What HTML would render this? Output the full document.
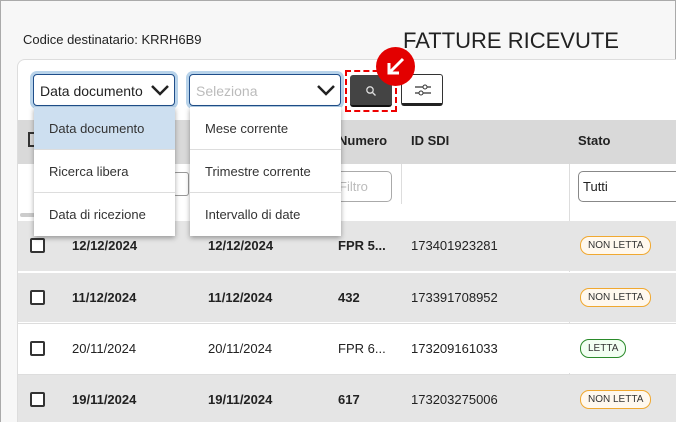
<!DOCTYPE html><html style="width:676px;height:422px;overflow:hidden"><head><style>
*{box-sizing:border-box;margin:0;padding:0}
body{width:676px;height:422px;overflow:hidden;background:#f7f7f7;font-family:"Liberation Sans",sans-serif;position:relative;color:#222;border:1px solid #aaa;border-bottom:none}
.a{position:absolute}
.card{left:16px;top:58px;width:659px;height:364px;background:#fff;border:1px solid #ddd;border-right:none;border-bottom:none;border-radius:8px 0 0 0;overflow:hidden}
.row{position:absolute;left:0;width:660px;height:50px;font-size:13px}
.row span{position:absolute;top:17px}
.cb{position:absolute;left:12px;top:17px;width:15px;height:15px;border:2px solid #333;border-radius:2px;background:#fff}
.b{font-weight:bold}
.pill{position:absolute;top:15px!important;left:562px;font-size:10px;border:1px solid #f0a830;background:#fff8ee;border-radius:9px;padding:3px 7px;color:#333}
.g{border-color:#2a8a2a;background:#f2fff2}
.sel{height:32px;border:1px solid #1f4e8a;border-radius:4px;box-shadow:0 0 0 3px #b8d3ea;background:#fff;font-size:14px;padding:8px 6px}
.dd{background:#fff;box-shadow:0 2px 5px rgba(0,0,0,.35);font-size:13px;color:#333}
.dd div{height:43px;padding:14px 0 0 15px;border-bottom:1px solid #ddd}
</style></head><body>
<div class="a" style="left:22px;top:31px;font-size:13px">Codice destinatario: KRRH6B9</div>
<div class="a" style="left:402px;top:27px;font-size:22px;color:#222">FATTURE RICEVUTE</div>
<div class="a card">
 <div class="a" style="left:0;top:60px;width:660px;height:44px;background:#d9d9d9"></div>
 <div class="a" style="left:320px;top:73px;font-size:13px;font-weight:bold">Numero</div>
 <div class="a" style="left:393px;top:73px;font-size:13px;font-weight:bold">ID SDI</div>
 <div class="a" style="left:560px;top:73px;font-size:13px;font-weight:bold">Stato</div>
 <div class="a" style="left:10px;top:72px;width:14px;height:15px;border:2px solid #333"></div>
 <div class="a" style="left:383px;top:104px;width:1px;height:40px;background:#ddd"></div>
 <div class="a" style="left:551px;top:104px;width:1px;height:260px;background:#ddd"></div>
 <div class="a" style="left:300px;top:111px;width:74px;height:31px;border:1px solid #aaa;border-radius:5px;color:#bbb;font-size:13px;padding:7px 0 0 20px">Filtro</div>
 <div class="a" style="left:560px;top:111px;width:130px;height:31px;border:1px solid #888;border-radius:5px;font-size:13px;padding:7px 0 0 4px">Tutti</div>
 <div class="a" style="left:155px;top:112px;width:16px;height:24px;border:1px solid #999;border-radius:3px"></div>
 <div class="a" style="left:2px;top:153px;width:60px;height:4px;background:#ccc;border-radius:2px"></div>
 <div class="row" style="top:161px;background:#e5e5e5"><i class="cb"></i><span class="b" style="left:54px">12/12/2024</span><span class="b" style="left:190px">12/12/2024</span><span class="b" style="left:320px">FPR 5...</span><span style="left:393px">173401923281</span><span class="pill">NON LETTA</span></div>
 <div class="row" style="top:212px;background:#e5e5e5;border-top:1px solid #fff"><i class="cb"></i><span class="b" style="left:54px">11/12/2024</span><span class="b" style="left:190px">11/12/2024</span><span class="b" style="left:320px">432</span><span style="left:393px">173391708952</span><span class="pill">NON LETTA</span></div>
 <div class="row" style="top:263px;background:#fff;border-top:1px solid #ddd"><i class="cb"></i><span style="left:54px">20/11/2024</span><span style="left:190px">20/11/2024</span><span style="left:320px">FPR 6...</span><span style="left:393px">173209161033</span><span class="pill g">LETTA</span></div>
 <div class="row" style="top:314px;background:#e5e5e5;border-top:1px solid #ddd"><i class="cb"></i><span class="b" style="left:54px">19/11/2024</span><span class="b" style="left:190px">19/11/2024</span><span class="b" style="left:320px">617</span><span style="left:393px">173203275006</span><span class="pill">NON LETTA</span></div>
</div>
<div class="a sel" style="left:32px;top:73px;width:142px">Data documento<svg class="a" style="right:4px;top:9px" width="20" height="12" viewBox="0 0 20 12"><path d="M2 2l8 8 8-8" stroke="#222" stroke-width="2.5" fill="none"/></svg></div>
<div class="a sel" style="left:188px;top:73px;width:152px;color:#bbb">Seleziona<svg class="a" style="right:4px;top:9px" width="20" height="12" viewBox="0 0 20 12"><path d="M2 2l8 8 8-8" stroke="#222" stroke-width="2.5" fill="none"/></svg></div>
<div class="a dd" style="left:33px;top:106px;width:141px"><div style="background:#cddff0">Data documento</div><div>Ricerca libera</div><div style="border:none">Data di ricezione</div></div>
<div class="a dd" style="left:189px;top:106px;width:151px"><div>Mese corrente</div><div>Trimestre corrente</div><div style="border:none">Intervallo di date</div></div>
<div class="a" style="left:344px;top:69px;width:52px;height:42px;border:2px dashed #e00"></div>
<div class="a" style="left:349px;top:74px;width:42px;height:32px;background:#444;border-radius:3px;border-bottom:2px solid #111"><svg class="a" style="left:15px;top:10px" width="12" height="12" viewBox="0 0 12 12"><circle cx="5" cy="5" r="3.2" stroke="#ddd" stroke-width="1.3" fill="none"/><path d="M7.5 7.5l3 3" stroke="#ddd" stroke-width="1.3"/></svg></div>
<div class="a" style="left:400px;top:73px;width:42px;height:32px;background:#fff;border:1px solid #333;border-radius:3px;border-bottom:3px solid #222"><svg class="a" style="left:12px;top:7px" width="18" height="16" viewBox="0 0 18 16"><path d="M1 5h16M1 11h16" stroke="#333" stroke-width="1.2"/><circle cx="11" cy="5" r="2" fill="#fff" stroke="#333"/><circle cx="7" cy="11" r="2" fill="#fff" stroke="#333"/></svg></div>
<div class="a" style="left:375px;top:46px;width:39px;height:39px;border-radius:50%;background:#e30000"><svg class="a" style="left:9px;top:9px" width="21" height="21" viewBox="0 0 21 21"><path d="M18 3L4 17M4 7v10h10" stroke="#fff" stroke-width="3" fill="none"/></svg></div>
</body></html>
